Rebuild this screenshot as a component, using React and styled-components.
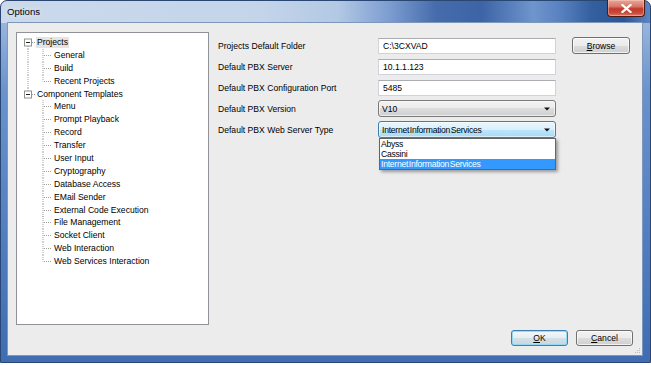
import React from "react";
import styled, { createGlobalStyle } from "styled-components";

const GlobalStyle = createGlobalStyle`
  body {
    margin: 0;
    background: #ffffff;
    font-family: "Liberation Sans", Arial, sans-serif;
  }
`;

const projectChildren = ["General", "Build", "Recent Projects"];
const templateChildren = [
  "Menu",
  "Prompt Playback",
  "Record",
  "Transfer",
  "User Input",
  "Cryptography",
  "Database Access",
  "EMail Sender",
  "External Code Execution",
  "File Management",
  "Socket Client",
  "Web Interaction",
  "Web Services Interaction",
];

const fields = [
  { label: "Projects Default Folder", value: "C:\\3CXVAD", browse: true },
  { label: "Default PBX Server", value: "10.1.1.123" },
  { label: "Default PBX Configuration Port", value: "5485" },
];

function Connector({ level, last, rootLine, first }) {
  const dot = { stroke: "#a0a0a0", strokeWidth: 1, strokeDasharray: "1 1" };
  if (level === 0) {
    return (
      <Gutter width="36" height="13">
        {!first && <line x1="11" y1="0" x2="11" y2="3" style={dot} />}
        {!last && <line x1="11" y1="10" x2="11" y2="13" style={dot} />}
        <line x1="15" y1="6.5" x2="19" y2="6.5" style={dot} />
        <rect x="7.5" y="3" width="7" height="7" fill="#fff" stroke="#919191" />
        <line x1="9" y1="6.5" x2="13" y2="6.5" stroke="#222" />
      </Gutter>
    );
  }
  return (
    <Gutter width="36" height="13">
      {rootLine && <line x1="11" y1="0" x2="11" y2="13" style={dot} />}
      <line x1="26" y1="0" x2="26" y2={last ? 6.5 : 13} style={dot} />
      <line x1="27" y1="6.5" x2="34" y2="6.5" style={dot} />
    </Gutter>
  );
}

function TreeRow({ label, level, last, rootLine, first, selected }) {
  return (
    <Row>
      <Connector level={level} last={last} rootLine={rootLine} first={first} />
      <RowText $level={level} $selected={selected}>
        {label}
      </RowText>
    </Row>
  );
}

function Arrow() {
  return (
    <svg width="6" height="4" viewBox="0 0 6 4">
      <path d="M0 0.5 H6 L3 3.5 Z" fill="#111" />
    </svg>
  );
}

export default function App() {
  return (
    <>
      <GlobalStyle />
      <Window>
        <TitleBar>
          <Title>Options</Title>
          <CloseButton>
            <svg width="11" height="9" viewBox="0 0 11 9">
              <path
                d="M1.5 1 L9.5 8 M9.5 1 L1.5 8"
                stroke="#fff"
                strokeWidth="2.2"
                strokeLinecap="square"
              />
            </svg>
          </CloseButton>
        </TitleBar>

        <Client>
          <Body>
            <Tree>
              <TreeRow label="Projects" level={0} first selected />
              {projectChildren.map((c, i) => (
                <TreeRow
                  key={c}
                  label={c}
                  level={1}
                  rootLine
                  last={i === projectChildren.length - 1}
                />
              ))}
              <TreeRow label="Component Templates" level={0} last />
              {templateChildren.map((c, i) => (
                <TreeRow
                  key={c}
                  label={c}
                  level={1}
                  last={i === templateChildren.length - 1}
                />
              ))}
            </Tree>

            <Form>
              {fields.map((f) => (
                <React.Fragment key={f.label}>
                  <Label>{f.label}</Label>
                  <TextBox>{f.value}</TextBox>
                  {f.browse ? (
                    <Button $w={58} $h={17}>
                      <u>B</u>rowse
                    </Button>
                  ) : (
                    <span />
                  )}
                </React.Fragment>
              ))}

              <Label>Default PBX Version</Label>
              <Combo>
                <span>V10</span>
                <Arrow />
              </Combo>
              <span />

              <Label>Default PBX Web Server Type</Label>
              <ComboWrap>
                <Combo $open>
                  <ComboText>Internet Information Services</ComboText>
                  <Arrow />
                </Combo>
                <DropList>
                  <DropItem>Abyss</DropItem>
                  <DropItem>Cassini</DropItem>
                  <DropItem $active>Internet Information Services</DropItem>
                </DropList>
              </ComboWrap>
              <span />
            </Form>
          </Body>

          <Footer>
            <Button $w={57} $h={16} $default>
              <u>O</u>K
            </Button>
            <Button $w={57} $h={16}>
              <u>C</u>ancel
            </Button>
          </Footer>

          <Grip width="7" height="7" viewBox="0 0 7 7">
            <rect x="5" y="1" width="1" height="1" fill="#b8b8b8" />
            <rect x="3" y="3" width="1" height="1" fill="#b8b8b8" />
            <rect x="5" y="3" width="1" height="1" fill="#b8b8b8" />
            <rect x="1" y="5" width="1" height="1" fill="#b8b8b8" />
            <rect x="3" y="5" width="1" height="1" fill="#b8b8b8" />
            <rect x="5" y="5" width="1" height="1" fill="#b8b8b8" />
          </Grip>
        </Client>
      </Window>
    </>
  );
}

const Window = styled.div`
  width: 651px;
  height: 363px;
  box-sizing: border-box;
  display: flex;
  flex-direction: column;
  padding: 0 7px 6px 6px;
  border: 1px solid #2a4673;
  border-radius: 7px 7px 0 0;
  background:
    linear-gradient(
        90deg,
        #cbd9ea 0%,
        #c4d5ea 40%,
        #b2c8e4 52%,
        #7b9cd0 60%,
        #466cab 67%,
        #3c64a6 74%,
        #6f95cc 82%,
        #5a82c0 86%,
        #34609f 91%,
        #2c5596 96%,
        #5e86c2 100%
      )
      top / 100% 22px no-repeat,
    linear-gradient(180deg, #a6bfe2 0%, #6a92cc 25%, #5580c2 60%, #3f6cb2 100%);
`;

const TitleBar = styled.div`
  height: 21px;
  display: flex;
  justify-content: space-between;
  align-items: flex-start;
`;

const Title = styled.div`
  font-size: 9.6px;
  line-height: 21px;
  color: #000;
  text-shadow: 0 0 6px rgba(255, 255, 255, 0.9);
`;

const CloseButton = styled.div`
  width: 38px;
  height: 17px;
  margin-top: -1px;
  margin-right: -2px;
  box-sizing: border-box;
  display: flex;
  align-items: center;
  justify-content: center;
  border: 1px solid #4b1a14;
  border-top: none;
  border-radius: 0 0 4px 4px;
  background: linear-gradient(180deg, #e9a798 0%, #d7786a 40%, #c3382b 55%, #c64a3b 80%, #dc7a62 100%);
  box-shadow: inset 0 0 0 1px rgba(255, 210, 200, 0.45);
`;

const Client = styled.div`
  flex: 1;
  position: relative;
  display: flex;
  flex-direction: column;
  padding: 9px 9px 9px 8px;
  background: #ececec;
  border: 1px solid #7e97bd;
`;

const Body = styled.div`
  display: flex;
  align-items: flex-start;
`;

const Tree = styled.div`
  width: 193px;
  height: 293px;
  box-sizing: border-box;
  padding-top: 3px;
  background: #ffffff;
  border: 1px solid #8f9298;
`;

const Row = styled.div`
  height: 12.9px;
  display: flex;
  align-items: center;
`;

const Gutter = styled.svg`
  flex: none;
  overflow: visible;
  align-self: flex-start;
`;

const RowText = styled.span`
  margin-left: ${(p) => (p.$level === 0 ? "-17px" : "0")};
  padding: 0 1px;
  font-size: 8.6px;
  line-height: 11px;
  color: #000;
  white-space: nowrap;
  background: ${(p) => (p.$selected ? "#e4e4e4" : "transparent")};
`;

const Form = styled.div`
  margin: 3px 0 0 9px;
  display: grid;
  grid-template-columns: 160px 178px 74px;
  grid-auto-rows: 21px;
  align-items: center;
`;

const Label = styled.div`
  font-size: 8.6px;
  color: #000;
  white-space: nowrap;
`;

const TextBox = styled.div`
  height: 16px;
  box-sizing: border-box;
  padding: 0 4px;
  display: flex;
  align-items: center;
  font-size: 8.6px;
  color: #000;
  background: #ffffff;
  border: 1px solid #d0d4da;
  border-top-color: #abadb3;
`;

const Combo = styled.div`
  height: 17px;
  box-sizing: border-box;
  padding: 0 5px 0 3px;
  display: flex;
  align-items: center;
  justify-content: space-between;
  font-size: 8.6px;
  color: #000;
  border-radius: 3px;
  border: 1px solid ${(p) => (p.$open ? "#3c7fb1" : "#7a7a7a")};
  background: ${(p) =>
    p.$open
      ? "linear-gradient(180deg, #eaf6fd 0%, #d9f0fc 50%, #bee6fd 50%, #a7d9f5 100%)"
      : "linear-gradient(180deg, #f2f2f2 0%, #ebebeb 50%, #dddddd 50%, #cfcfcf 100%)"};
  box-shadow: inset 0 0 0 1px rgba(255, 255, 255, 0.6);
`;

const ComboWrap = styled.div`
  position: relative;
`;

const ComboText = styled.span`
  letter-spacing: -0.25px;
  word-spacing: -1.5px;
  white-space: nowrap;
`;

const DropList = styled.div`
  position: absolute;
  top: 100%;
  left: 1px;
  right: 0;
  z-index: 2;
  background: #ffffff;
  border: 1px solid #646464;
  box-shadow: 2px 2px 3px rgba(0, 0, 0, 0.35);
`;

const DropItem = styled.div`
  height: 10px;
  padding-left: 1px;
  font-size: 8.6px;
  line-height: 10px;
  letter-spacing: -0.25px;
  word-spacing: -1.5px;
  white-space: nowrap;
  color: ${(p) => (p.$active ? "#ffffff" : "#000000")};
  background: ${(p) => (p.$active ? "#3399ff" : "transparent")};
`;

const Button = styled.div`
  width: ${(p) => p.$w}px;
  height: ${(p) => p.$h}px;
  justify-self: end;
  box-sizing: border-box;
  display: flex;
  align-items: center;
  justify-content: center;
  font-size: 8.6px;
  color: #000;
  border-radius: 3px;
  border: 1px solid ${(p) => (p.$default ? "#3c7fb1" : "#707070")};
  background: ${(p) =>
    p.$default
      ? "linear-gradient(180deg, #f2f7fa 0%, #e6eef3 50%, #d5e0e7 50%, #c9d6de 100%)"
      : "linear-gradient(180deg, #f2f2f2 0%, #ebebeb 50%, #dddddd 50%, #cfcfcf 100%)"};
  box-shadow: inset 0 0 0 1px
    ${(p) => (p.$default ? "rgba(140, 215, 245, 0.9)" : "rgba(255, 255, 255, 0.7)")};

  u {
    text-decoration-thickness: 1px;
    text-underline-offset: 1px;
  }
`;

const Footer = styled.div`
  margin-top: 5px;
  display: flex;
  justify-content: flex-end;
  gap: 8px;
`;

const Grip = styled.svg`
  position: absolute;
  right: 1px;
  bottom: 1px;
`;
